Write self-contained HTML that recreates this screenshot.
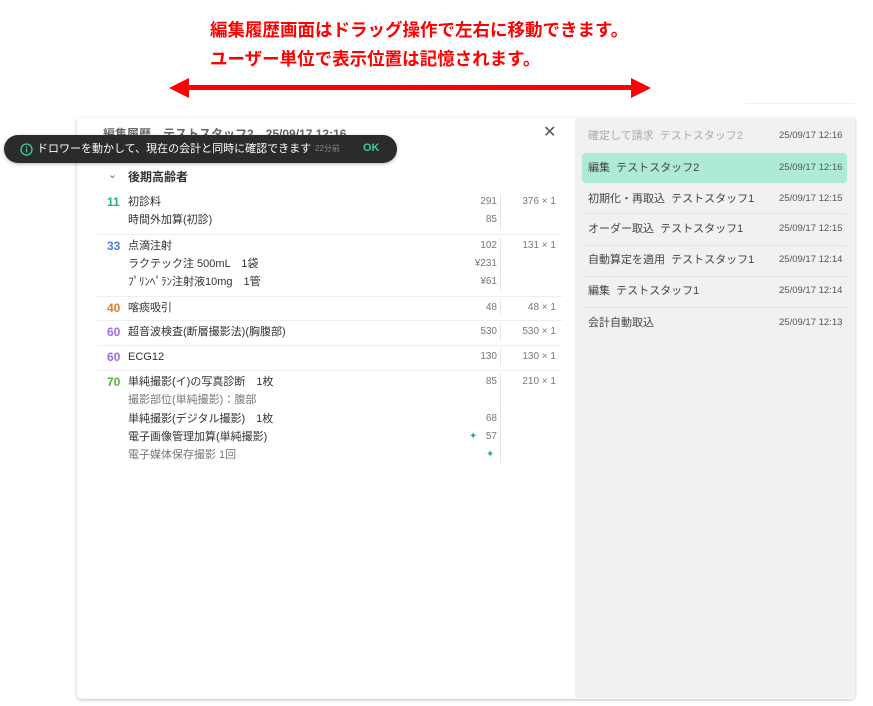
<!DOCTYPE html>
<html><head><meta charset="utf-8"><style>
*{margin:0;padding:0;box-sizing:border-box}
body{width:873px;height:706px;background:#fff;position:relative;overflow:hidden;font-family:"Liberation Sans","Noto Sans CJK JP",sans-serif;color:#333}
.a{position:absolute;white-space:nowrap}
.t{font-size:11px;line-height:14px}
.r{text-align:right}
.g{color:#777}
.sep{position:absolute;height:1px;background:#eee;left:97px;width:465px}
.vd{position:absolute;width:1px;background:#e6e6e6;left:500px}
.it{position:absolute;left:588px;font-size:11px;line-height:14px;color:#444}
.tm{position:absolute;left:779px;font-size:9.5px;line-height:14px;color:#555}
.hs{position:absolute;left:582px;width:265px;height:1px;background:#e2e2e2}
</style></head><body>
<div class="a" style="left:210px;top:19px;font-size:17.5px;font-weight:bold;color:#f00;line-height:22px">編集履歴画面はドラッグ操作で左右に移動できます。</div>
<div class="a" style="left:210px;top:48px;font-size:17.5px;font-weight:bold;color:#f00;line-height:22px">ユーザー単位で表示位置は記憶されます。</div>
<svg class="a" style="left:165px;top:76px" width="490" height="24"><rect x="18" y="9" width="454" height="5" fill="#f00"/><polygon points="4,12 24,2 24,22" fill="#f00"/><polygon points="486,12 466,2 466,22" fill="#f00"/></svg>
<div class="a" style="left:745px;top:103px;width:110px;height:1px;background:#f0f0f0"></div>
<div class="a" style="left:77px;top:118px;width:778px;height:581px;background:#fff;border-radius:0 0 5px 5px;box-shadow:0 1px 3px rgba(0,0,0,.25)"></div>
<div class="a" style="left:575px;top:118px;width:280px;height:580px;background:#f1f1f1;border-radius:0 0 5px 0"></div>
<div class="a" style="left:103px;top:126px;font-size:12px;color:#666;font-weight:bold;line-height:16px">編集履歴　テストスタッフ2　25/09/17 12:16</div>
<div class="a" style="left:543px;top:124px;font-size:16px;color:#555;line-height:18px">✕</div>
<div class="a" style="left:4px;top:135px;width:393px;height:28px;background:#2b2b2b;border-radius:14px;box-shadow:0 1px 3px rgba(0,0,0,.3)"></div>
<svg class="a" style="left:20px;top:143px" width="13" height="13"><circle cx="6.5" cy="6.5" r="5.5" fill="none" stroke="#3ccf95" stroke-width="1.3"/><rect x="5.9" y="5.5" width="1.3" height="4" fill="#3ccf95"/><rect x="5.9" y="3.3" width="1.3" height="1.3" fill="#3ccf95"/></svg>
<div class="a" style="left:37px;top:142px;font-size:11px;color:#fff;line-height:14px">ドロワーを動かして、現在の会計と同時に確認できます</div>
<div class="a" style="left:315px;top:143px;font-size:8px;color:#888;line-height:12px">22分前</div>
<div class="a" style="left:363px;top:141px;font-size:11px;color:#3ccf95;font-weight:bold;line-height:14px">OK</div>
<div class="a" style="left:108px;top:168px;font-size:11px;color:#666">⌄</div>
<div class="a" style="left:128px;top:169px;font-size:12px;font-weight:bold;color:#333;line-height:16px">後期高齢者</div>

<div class="a t" style="left:107px;top:195px;color:#1bb67f;font-weight:bold;font-size:12px">11</div>
<div class="a t" style="left:128px;top:195px">初診料</div><div class="a t g r" style="left:450px;width:47px;top:195px;font-size:10px">291</div><div class="a t g r" style="left:505px;width:51px;top:195px;font-size:10px">376 × 1</div>
<div class="a t" style="left:128px;top:213px">時間外加算(初診)</div><div class="a t g r" style="left:450px;width:47px;top:213px;font-size:10px">85</div>
<div class="vd" style="top:194px;height:36px"></div><div class="sep" style="top:234px"></div>

<div class="a t" style="left:107px;top:239px;color:#4a7de6;font-weight:bold;font-size:12px">33</div>
<div class="a t" style="left:128px;top:239px">点滴注射</div><div class="a t g r" style="left:450px;width:47px;top:239px;font-size:10px">102</div><div class="a t g r" style="left:505px;width:51px;top:239px;font-size:10px">131 × 1</div>
<div class="a t" style="left:128px;top:257px">ラクテック注 500mL　1袋</div><div class="a t g r" style="left:450px;width:47px;top:257px;font-size:10px">¥231</div>
<div class="a t" style="left:128px;top:275px">ﾌﾟﾘﾝﾍﾟﾗﾝ注射液10mg　1管</div><div class="a t g r" style="left:450px;width:47px;top:275px;font-size:10px">¥61</div>
<div class="vd" style="top:238px;height:54px"></div><div class="sep" style="top:296px"></div>

<div class="a t" style="left:107px;top:301px;color:#ee7a1e;font-weight:bold;font-size:12px">40</div>
<div class="a t" style="left:128px;top:301px">喀痰吸引</div><div class="a t g r" style="left:450px;width:47px;top:301px;font-size:10px">48</div><div class="a t g r" style="left:505px;width:51px;top:301px;font-size:10px">48 × 1</div>
<div class="vd" style="top:299px;height:17px"></div><div class="sep" style="top:320px"></div>

<div class="a t" style="left:107px;top:325px;color:#9b6ae6;font-weight:bold;font-size:12px">60</div>
<div class="a t" style="left:128px;top:325px">超音波検査(断層撮影法)(胸腹部)</div><div class="a t g r" style="left:450px;width:47px;top:325px;font-size:10px">530</div><div class="a t g r" style="left:505px;width:51px;top:325px;font-size:10px">530 × 1</div>
<div class="vd" style="top:323px;height:18px"></div><div class="sep" style="top:345px"></div>

<div class="a t" style="left:107px;top:350px;color:#9b6ae6;font-weight:bold;font-size:12px">60</div>
<div class="a t" style="left:128px;top:350px">ECG12</div><div class="a t g r" style="left:450px;width:47px;top:350px;font-size:10px">130</div><div class="a t g r" style="left:505px;width:51px;top:350px;font-size:10px">130 × 1</div>
<div class="vd" style="top:348px;height:18px"></div><div class="sep" style="top:370px"></div>

<div class="a t" style="left:107px;top:375px;color:#4fb82d;font-weight:bold;font-size:12px">70</div>
<div class="a t" style="left:128px;top:375px">単純撮影(イ)の写真診断　1枚</div><div class="a t g r" style="left:450px;width:47px;top:375px;font-size:10px">85</div><div class="a t g r" style="left:505px;width:51px;top:375px;font-size:10px">210 × 1</div>
<div class="a t g" style="left:128px;top:393px">撮影部位(単純撮影)：腹部</div>
<div class="a t" style="left:128px;top:412px">単純撮影(デジタル撮影)　1枚</div><div class="a t g r" style="left:450px;width:47px;top:412px;font-size:10px">68</div>
<div class="a t" style="left:128px;top:430px">電子画像管理加算(単純撮影)</div><div class="a t g r" style="left:450px;width:47px;top:430px;font-size:10px">57</div>
<div class="a" style="left:469px;top:431px;color:#1bb67f;font-size:10px">✦</div>
<div class="a t g" style="left:128px;top:448px">電子媒体保存撮影 1回</div>
<div class="a" style="left:486px;top:449px;color:#1bb67f;font-size:10px">✦</div>
<div class="vd" style="top:373px;height:90px"></div>

<div class="it" style="top:129px;color:#aaa">確定して請求&nbsp; テストスタッフ2</div><div class="tm" style="top:129px">25/09/17 12:16</div>
<div class="a" style="left:582px;top:153px;width:265px;height:30px;background:#aeebd6;border-radius:4px"></div>
<div class="it" style="top:161px">編集&nbsp; テストスタッフ2</div><div class="tm" style="top:161px">25/09/17 12:16</div>
<div class="it" style="top:192px">初期化・再取込&nbsp; テストスタッフ1</div><div class="tm" style="top:192px">25/09/17 12:15</div>
<div class="hs" style="top:213px"></div>
<div class="it" style="top:222px">オーダー取込&nbsp; テストスタッフ1</div><div class="tm" style="top:222px">25/09/17 12:15</div>
<div class="hs" style="top:245px"></div>
<div class="it" style="top:253px">自動算定を適用&nbsp; テストスタッフ1</div><div class="tm" style="top:253px">25/09/17 12:14</div>
<div class="hs" style="top:276px"></div>
<div class="it" style="top:284px">編集&nbsp; テストスタッフ1</div><div class="tm" style="top:284px">25/09/17 12:14</div>
<div class="hs" style="top:307px"></div>
<div class="it" style="top:316px">会計自動取込</div><div class="tm" style="top:316px">25/09/17 12:13</div>
</body></html>
